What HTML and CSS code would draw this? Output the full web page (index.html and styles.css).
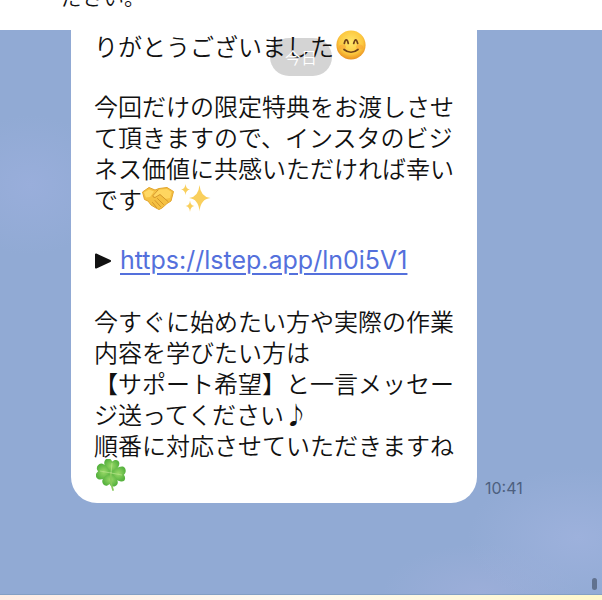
FILE: index.html
```html
<!DOCTYPE html>
<html lang="ja">
<head>
    <meta charset="UTF-8">
    <meta name="viewport" content="width=device-width, initial-scale=1.0">
    <title>トーク</title>
    <link rel="stylesheet" href="styles.css">
</head>
<body>
<header class="caption"><p>ださい。</p></header>
<main class="chat">
    <div class="date">今日</div>
    <div class="message">
        <div class="bubble">
            <p>りがとうございました<svg class="emoji smile" viewBox="0 0 30 30" role="img" aria-label="笑顔">
                <defs>
                    <radialGradient id="face" cx="50%" cy="40%" r="62%">
                        <stop offset="0" stop-color="#ffe76a"/>
                        <stop offset="0.65" stop-color="#fcc840"/>
                        <stop offset="1" stop-color="#e88a1c"/>
                    </radialGradient>
                </defs>
                <circle cx="15" cy="15" r="14.6" fill="url(#face)"/>
                <ellipse cx="6.5" cy="17" rx="3.5" ry="2.5" fill="#f58a2c" opacity="0.35"/>
                <ellipse cx="23.5" cy="17" rx="3.5" ry="2.5" fill="#f58a2c" opacity="0.35"/>
                <path d="M8.3 13.5Q9 9.8 10.3 9.8T12.3 13.5M17.7 13.5Q18.7 9.8 19.7 9.8T21.7 13.5M8 19.5Q15 25 22 19.5" fill="none" stroke="#70421a" stroke-width="1.7" stroke-linecap="round"/>
            </svg></p>
            <p>今回だけの限定特典をお渡しさせて頂きますので、インスタのビジネス価値に共感いただければ幸いです<svg class="emoji shake" viewBox="0 0 32 26" role="img" aria-label="握手">
                <path d="M0.5 7L7 2.5L13 5L17 3.5L25 2.5L31.5 6.5L29 16L25 18.5L20 23L17 24.5L14 23L9 20L6 16L2.5 14.5Z" fill="#f5c142" stroke="#e2a630" stroke-width="1" stroke-linejoin="round"/>
                <path d="M2 7.5L7 4.5L12 6.5L8 12L4 12.5Z" fill="#ffd965"/>
                <path d="M13 7L18 4.5L25 4L29.5 7L28 13L23 14L18 9.5L14 12.5L11 11.5Z" fill="#ffd660"/>
                <path d="M16 5L11 10.5Q10.5 12.5 13 12.5L18 9.5L26 16.5M15.5 13.5L21.5 19.5M13 15.5L18.5 21.5M10.5 17.5L14.5 22.5" fill="none" stroke="#cf9026" stroke-width="0.9" stroke-linecap="round" stroke-linejoin="round"/>
            </svg><svg class="emoji sparkles" viewBox="0 0 30 30" role="img" aria-label="きらきら">
                <path d="M18.5 2Q19.5 14 29.5 15Q19.5 16 18.5 28.5Q17.5 16 8 15Q17.5 14 18.5 2Z" fill="#f9cf5c"/>
                <path d="M4.5 1Q5 6 9 6.5Q5 7 4.5 12Q4 7 0 6.5Q4 6 4.5 1Z" fill="#f9cf5c"/>
                <path d="M9 17.5Q9.5 22.5 13.5 23Q9.5 23.5 9 29Q8.5 23.5 4.5 23Q8.5 22.5 9 17.5Z" fill="#f9cf5c"/>
            </svg></p>
            <p><svg class="marker" viewBox="0 0 18 16" aria-hidden="true">
                <path d="M2 1.5L16 8L2 14.5Z" fill="#111" stroke="#111" stroke-width="2" stroke-linejoin="round"/>
            </svg><a class="link" href="https://lstep.app/ln0i5V1">https://lstep.app/ln0i5V1</a></p>
            <p>今すぐに始めたい方や実際の作業内容を学びたい方は<br>
                【サポート希望】と一言メッセージ送ってください♪<br>
                順番に対応させていただきますね<svg class="emoji clover" viewBox="0 0 30 32" role="img" aria-label="四つ葉のクローバー">
                <defs>
                    <radialGradient id="leaf">
                        <stop offset="0" stop-color="#9ad968"/>
                        <stop offset="1" stop-color="#58b340"/>
                    </radialGradient>
                </defs>
                <g fill="url(#leaf)" transform="rotate(8 15 14)">
                    <path d="M15 14C10 11 6 7 7 3C8 -1 13 -1 14.5 2.5C17 -1 22 0 22 4C22 8 19 11 15 14Z"/>
                    <path d="M15 14C11 9 8 6 4 6C0 7-1 12 2 14C-1 17 0 21 4 22C9 22 12 18 15 14Z"/>
                    <path d="M15 14C18 9 22 6 26 6C30 7 30 12 28 14C31 17 30 21 26 21C21 21 18 18 15 14Z"/>
                    <path d="M15 14C10 17 6 21 8 25C10 28 13 28 15 25C17 28 21 28 23 24C24 20 19 17 15 14Z"/>
                </g>
                <path d="M15 14Q14 24 17 31" fill="none" stroke="#86c95a" stroke-width="1.8" stroke-linecap="round"/>
                <path d="M16 4L15 14L4 12M15 14L26 16" fill="none" stroke="#b9e58c" stroke-width="0.7"/>
            </svg></p>
        </div>
        <time class="time">10:41</time>
    </div>
    <span class="scrollbar"></span>
</main>
<footer class="strip"></footer>
</body>
</html>
```

FILE: styles.css
```css
* {
    box-sizing: border-box;
    margin: 0;
    padding: 0;
}
body {
    display: flex;
    flex-direction: column;
    min-height: 100vh;
    font-family: "Noto Sans CJK JP", sans-serif;
    font-weight: 350;
    color: #111;
    background-color: #fff;
}
.caption {
    display: flex;
    align-items: flex-end;
    height: 30px;
    padding: 0 61px 19px;
    font-size: 21px;
    line-height: 30px;
}
.chat {
    position: relative;
    flex: 1;
    background:
        radial-gradient(ellipse 80px 70px at 30px 155px, #99aedb 0%, transparent 100%),
        radial-gradient(ellipse 110px 70px at 96% 90%, #9db1dc 0%, transparent 100%),
        radial-gradient(ellipse 100px 50px at 80% 100%, #9caed9 0%, transparent 100%),
        #91aad4;
    border-bottom: 1px solid #839fc4;
}
.message {
    display: flex;
    align-items: flex-end;
    gap: 8px;
    padding: 0 77px 0 71px;
}
.bubble {
    flex: 1;
    display: flex;
    flex-direction: column;
    gap: 29px;
    padding: 0 22px 12px 23px;
    font-size: 24px;
    line-height: 31px;
    text-spacing-trim: space-all;
    background-color: #fff;
    border-radius: 0 0 26px 26px;
}
.emoji {
    display: inline-block;
    width: 30px;
    height: 30px;
    margin: -12px 2px -4px;
    vertical-align: middle;
}
.shake {
    width: 32px;
    height: 26px;
    margin-left: 0;
}
.sparkles {
    margin-left: 5px;
}
.clover {
    height: 32px;
}
.marker {
    width: 18px;
    height: 16px;
    margin-right: 8px;
}
.link {
    font-family: Inter, sans-serif;
    font-size: 25px;
    font-weight: 400;
    color: #5470dc;
    text-decoration-thickness: 2px;
    text-underline-offset: 4px;
}
.time {
    width: 40px;
    padding-bottom: 5px;
    font-family: Inter, sans-serif;
    font-size: 16px;
    font-weight: 400;
    line-height: 20px;
    color: #4d607f;
}
.date {
    position: absolute;
    top: 8px;
    left: 50%;
    width: 62px;
    margin-left: -31px;
    font-size: 16px;
    line-height: 38px;
    text-align: center;
    color: #fff;
    background-color: rgba(0, 0, 0, 0.17);
    border-radius: 19px;
}
.scrollbar {
    position: absolute;
    right: 5px;
    bottom: 4px;
    width: 5px;
    height: 12px;
    background-color: #61728f;
    border-radius: 3px;
}
.strip {
    height: 5px;
    background: linear-gradient(to right, #ffebe3, #fffaf0 50%, #fff8cb);
}
```
